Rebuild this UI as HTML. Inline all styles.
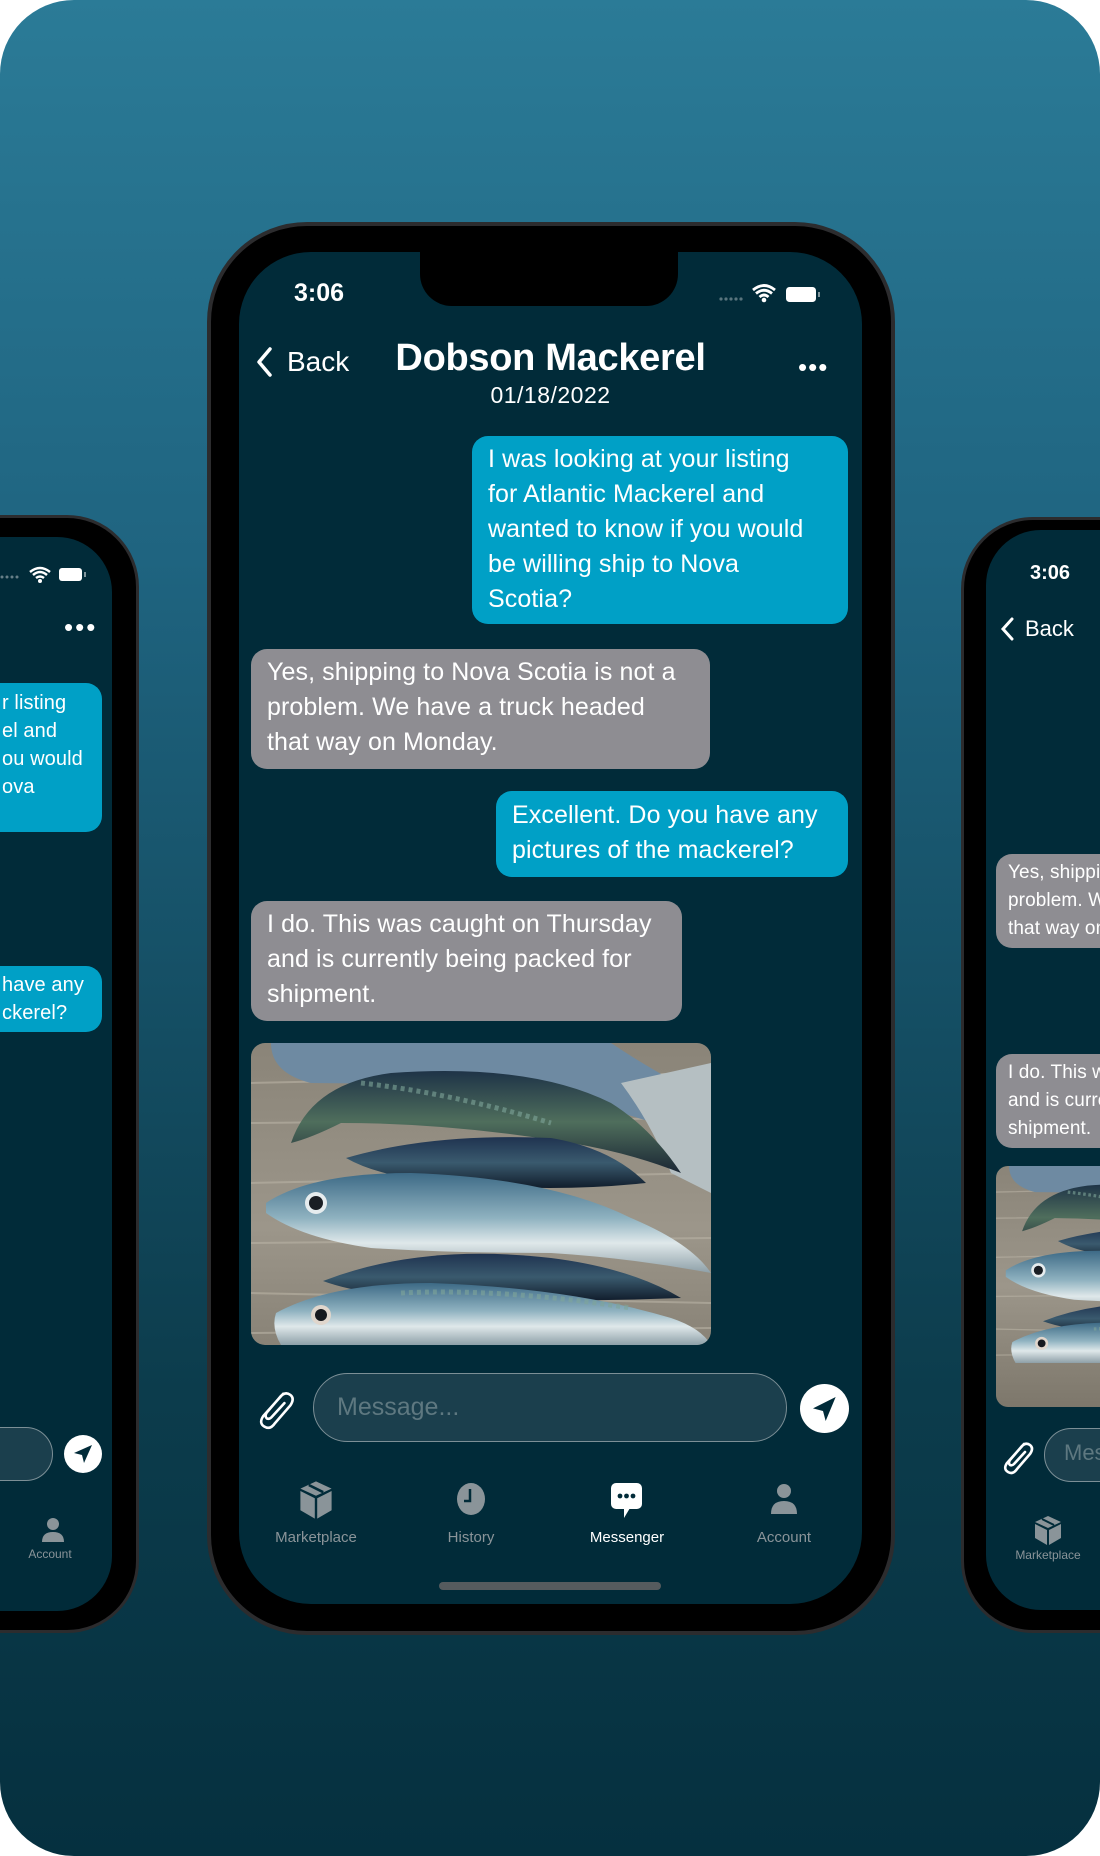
<!DOCTYPE html>
<html><head><meta charset="utf-8"><style>
*{margin:0;padding:0;box-sizing:border-box}
html,body{width:1100px;height:1856px;background:#fff;overflow:hidden}
body{font-family:"Liberation Sans",sans-serif;color:#fff;position:relative}
.bg{position:absolute;left:0;top:0;width:1100px;height:1856px;border-radius:74px;background:linear-gradient(#2b7b97 0%,#1f6480 30%,#0c3c4c 75%,#05303f 100%);overflow:hidden}
.frame{position:absolute;background:#000;border:3px solid #2c2c2e}
.scr{position:absolute;background:#012b39;overflow:hidden}
.a{position:absolute}
.b{position:absolute;border-radius:16px;font-size:25px;line-height:35px;padding:6px 16px;color:#fff;letter-spacing:.1px}
.blue{background:#00a0c6}.grey{background:#8e8d92}
.tab{position:absolute;width:130px;text-align:center;font-size:15px;color:#8a9499}
</style></head><body>
<div class="bg">

<!-- LEFT PHONE -->
<div class="frame" style="left:-200px;top:515px;width:339px;height:1118px;border-radius:72px"></div>
<div class="scr" style="left:-180px;top:537px;width:292px;height:1074px;border-radius:55px">
  <svg class="a" style="left:180px;top:28px" width="120" height="20"><g fill="#fff"><circle cx="2" cy="12" r="1.5" opacity=".4"/><circle cx="7" cy="12" r="1.5" opacity=".4"/><circle cx="12" cy="12" r="1.5" opacity=".4"/><circle cx="17" cy="12" r="1.5" opacity=".4"/></g>
  <path d="M30 7 Q40 -1 50 7 M33 10 Q40 4 47 10 M36 13 Q40 10 44 13" stroke="#fff" stroke-width="2.5" fill="none"/><circle cx="40" cy="16" r="2" fill="#fff"/>
  <rect x="59" y="3" width="23" height="13" rx="3" fill="#fff"/><rect x="84" y="7" width="2" height="5" fill="#fff" opacity=".5"/></svg>
  <div class="a" style="left:244px;top:80px;font-size:26px;letter-spacing:2px;line-height:20px">•••</div>
  <div class="b blue" style="left:-100px;top:146px;width:382px;height:149px;font-size:20px;line-height:28px;padding:6px 14px 6px 14px;white-space:nowrap;text-align:left"><div style="position:absolute;left:282px;top:6px">r listing<br>el and<br>ou would<br>ova</div></div>
  <div class="b blue" style="left:-100px;top:429px;width:382px;height:66px;font-size:20px;line-height:28px;padding:5px 14px;white-space:nowrap"><div style="position:absolute;left:282px;top:5px">have any<br>ckerel?</div></div>
  <div class="a" style="left:0;top:890px;width:233px;height:54px;border-radius:27px;background:#1b3f4d;border:1px solid #7c8f96"></div>
  <div class="a" style="left:244px;top:898px;width:38px;height:38px;border-radius:50%;background:#fff"></div>
  <svg class="a" style="left:251px;top:905px" width="24" height="24" viewBox="0 0 24 24"><path d="M21 3 L3 11 L11 13 L13 21 Z" fill="#012b39"/></svg>
  <svg class="a" style="left:218px;top:978px" width="30" height="30" viewBox="0 0 30 30"><circle cx="15" cy="9" r="6" fill="#8a9499"/><path d="M4 27 Q4 17 15 17 Q26 17 26 27 Z" fill="#8a9499"/></svg>
  <div class="tab" style="left:165px;top:1010px;font-size:12px">Account</div>
</div>

<!-- RIGHT PHONE -->
<div class="frame" style="left:961px;top:517px;width:339px;height:1116px;border-radius:72px"></div>
<div class="scr" style="left:986px;top:530px;width:300px;height:1080px;border-radius:55px">
  <div class="a" style="left:44px;top:32px;font-size:20px;font-weight:bold">3:06</div>
  <svg class="a" style="left:12px;top:86px" width="20" height="26"><path d="M14 3 L5 13 L14 23" stroke="#fff" stroke-width="3" fill="none" stroke-linecap="round"/></svg>
  <div class="a" style="left:39px;top:86px;font-size:22px">Back</div>
  <div class="b grey" style="left:10px;top:324px;width:200px;height:94px;font-size:19px;line-height:28px;padding:5px 12px;white-space:nowrap">Yes, shipping<br>problem. We<br>that way on</div>
  <div class="b grey" style="left:10px;top:524px;width:200px;height:94px;font-size:19px;line-height:28px;padding:5px 12px;white-space:nowrap">I do. This was<br>and is currently<br>shipment.</div>
  <svg class="a" style="left:10px;top:636px;border-radius:12px" width="300" height="241" viewBox="0 0 460 370" preserveAspectRatio="xMinYMin slice"><use href="#fish"/></svg>
  <svg class="a" style="left:14px;top:908px" width="34" height="38" viewBox="0 0 34 38"><path d="M24 6 L7 25 Q3 31 8 34 Q13 37 17 31 L30 16 Q34 10 30 7 Q26 4 22 8 L10 22 Q8 25 10 27 Q12 28 14 26 L25 14" stroke="#fff" stroke-width="2.6" fill="none" stroke-linecap="round"/></svg>
  <div class="a" style="left:58px;top:898px;width:300px;height:54px;border-radius:27px;background:#1b3f4d;border:1px solid #7c8f96"></div>
  <div class="a" style="left:78px;top:910px;font-size:22px;color:#5e7880">Message...</div>
  <svg class="a" style="left:47px;top:984px" width="30" height="32" viewBox="0 0 30 32"><path d="M15 2 L28 8 L15 14 L2 8 Z" fill="#8a9499"/><path d="M2 10 L14 16 L14 31 L2 24 Z M16 16 L28 10 L28 24 L16 31 Z" fill="#8a9499"/><path d="M9 5 L21 11" stroke="#012b39" stroke-width="2"/></svg>
  <div class="tab" style="left:-3px;top:1018px;font-size:12px">Marketplace</div>
</div>

<!-- CENTER PHONE -->
<div class="frame" style="left:207px;top:222px;width:688px;height:1413px;border-radius:100px;border-width:4px"></div>
<div class="scr" style="left:239px;top:252px;width:623px;height:1352px;border-radius:72px">
  <div class="a" style="left:181px;top:0;width:258px;height:54px;background:#000;border-radius:0 0 32px 32px"></div>
  <div class="a" style="left:55px;top:27px;font-size:25px;font-weight:bold">3:06</div>
  <svg class="a" style="left:480px;top:30px" width="120" height="24"><g fill="#fff" opacity=".35"><circle cx="2" cy="17" r="1.6"/><circle cx="7" cy="17" r="1.6"/><circle cx="12" cy="17" r="1.6"/><circle cx="17" cy="17" r="1.6"/><circle cx="22" cy="17" r="1.6"/></g>
  <path d="M34 8 Q45 -1 56 8 M37 11.5 Q45 5 53 11.5 M40.5 15 Q45 11 49.5 15" stroke="#fff" stroke-width="2.8" fill="none"/><circle cx="45" cy="18" r="2.3" fill="#fff"/>
  <rect x="67" y="5" width="30" height="15" rx="3.5" fill="#fff"/><rect x="99" y="10" width="2" height="5" fill="#fff" opacity=".5"/></svg>
  <svg class="a" style="left:14px;top:94px" width="24" height="32"><path d="M17 3 L6 16 L17 29" stroke="#fff" stroke-width="3.5" fill="none" stroke-linecap="round" stroke-linejoin="round"/></svg>
  <div class="a" style="left:48px;top:94px;font-size:28px">Back</div>
  <div class="a" style="left:0;top:85px;width:623px;text-align:center;font-size:38px;font-weight:bold;letter-spacing:-.3px">Dobson Mackerel</div>
  <div class="a" style="left:0;top:130px;width:623px;text-align:center;font-size:23px;letter-spacing:.5px">01/18/2022</div>
  <div class="a" style="left:559px;top:103px;font-size:26px;letter-spacing:1px;line-height:24px">•••</div>
  <div class="b blue" style="left:233px;top:184px;width:376px;height:188px">I was looking at your listing<br>for Atlantic Mackerel and<br>wanted to know if you would<br>be willing ship to Nova<br>Scotia?</div>
  <div class="b grey" style="left:12px;top:397px;width:459px;height:120px">Yes, shipping to Nova Scotia is not a<br>problem. We have a truck headed<br>that way on Monday.</div>
  <div class="b blue" style="left:257px;top:539px;width:352px;height:86px;padding-top:7px">Excellent. Do you have any<br>pictures of the mackerel?</div>
  <div class="b grey" style="left:12px;top:649px;width:431px;height:120px">I do. This was caught on Thursday<br>and is currently being packed for<br>shipment.</div>
  <svg class="a" style="left:12px;top:791px;border-radius:14px" width="460" height="302" viewBox="0 0 460 302">
   <defs>
    <linearGradient id="wood" x1="0" y1="0" x2="0" y2="1"><stop offset="0" stop-color="#8a8478"/><stop offset=".5" stop-color="#9c968a"/><stop offset="1" stop-color="#7d776b"/></linearGradient>
    <linearGradient id="dk" x1="0" y1="0" x2="0" y2="1"><stop offset="0" stop-color="#1f3350"/><stop offset=".5" stop-color="#3a5a6e"/><stop offset="1" stop-color="#111d2c"/></linearGradient>
    <linearGradient id="sv" x1="0" y1="0" x2="0" y2="1"><stop offset="0" stop-color="#3d6a86"/><stop offset=".45" stop-color="#8fb2c0"/><stop offset=".7" stop-color="#dfe8ea"/><stop offset="1" stop-color="#8ea0a8"/></linearGradient>
    <linearGradient id="gr" x1="0" y1="0" x2="0" y2="1"><stop offset="0" stop-color="#1e3347"/><stop offset=".5" stop-color="#4f6e5c"/><stop offset="1" stop-color="#1a2634"/></linearGradient>
    <g id="fish">
     <rect width="460" height="370" fill="url(#wood)"/>
     <g stroke="#b9b3a5" stroke-width="2" opacity=".6"><path d="M0 40 L460 30 M0 80 L460 75 M0 140 L460 130 M0 200 L460 195 M0 250 L460 260 M0 290 L460 285"/></g>
     <path d="M20 0 L360 0 Q420 40 470 60 L470 110 Q420 80 330 60 Q200 40 60 40 Q20 30 20 0Z" fill="#6e8aa2"/>
     <path d="M370 40 L460 20 L460 150 L420 130 Q400 80 370 40Z" fill="#b5bfc2"/>
     <path d="M40 100 Q60 40 140 30 Q280 20 360 60 Q400 85 430 130 Q380 110 320 100 Q200 80 90 80 Q60 95 40 100Z" fill="url(#gr)"/>
     <path d="M95 115 Q180 90 300 95 Q360 105 395 140 Q300 150 200 140 Q130 135 95 115Z" fill="url(#dk)"/>
     <path d="M15 160 Q60 130 160 130 Q300 135 380 175 Q440 200 460 230 Q380 215 300 210 Q200 210 120 205 Q50 195 15 170Z" fill="url(#sv)"/>
     <circle cx="65" cy="160" r="11" fill="#e6ecee"/><circle cx="65" cy="160" r="7" fill="#1a1e24"/>
     <path d="M72 238 Q170 200 300 215 Q380 225 430 255 Q300 260 180 255 Q110 252 72 238Z" fill="url(#dk)"/>
     <path d="M25 270 Q80 240 180 240 Q320 245 420 275 Q450 285 460 302 L30 302 Q20 285 25 270Z" fill="url(#sv)"/>
     <circle cx="70" cy="272" r="10" fill="#e0d6cc"/><circle cx="70" cy="272" r="6" fill="#16191e"/>
     <path d="M110 40 Q200 50 300 80 M150 250 Q250 245 380 265" stroke="#7fa59a" stroke-width="5" stroke-dasharray="4 4" fill="none" opacity=".6"/>
    </g>
   </defs>
   <use href="#fish"/>
  </svg>
  <svg class="a" style="left:16px;top:1134px" width="40" height="46" viewBox="0 0 34 38"><path d="M24 6 L7 25 Q3 31 8 34 Q13 37 17 31 L30 16 Q34 10 30 7 Q26 4 22 8 L10 22 Q8 25 10 27 Q12 28 14 26 L25 14" stroke="#fff" stroke-width="2.2" fill="none" stroke-linecap="round"/></svg>
  <div class="a" style="left:74px;top:1121px;width:474px;height:69px;border-radius:35px;background:#1b3f4d;border:1.5px solid #7c8f96"></div>
  <div class="a" style="left:98px;top:1141px;font-size:25px;color:#5e7880">Message...</div>
  <div class="a" style="left:561px;top:1132px;width:49px;height:49px;border-radius:50%;background:#fff"></div>
  <svg class="a" style="left:570px;top:1141px" width="32" height="32" viewBox="0 0 24 24"><path d="M20 3 L3 11.5 L10.5 13.5 L12.5 21 Z" fill="#012b39"/></svg>
  <svg class="a" style="left:59px;top:1227px" width="36" height="42" viewBox="0 0 30 35"><path d="M15 2 L28 8 L15 14 L2 8 Z" fill="#8a9499"/><path d="M2 10 L14 16 L14 33 L2 26 Z M16 16 L28 10 L28 26 L16 33 Z" fill="#8a9499"/><path d="M9 5 L21 11" stroke="#012b39" stroke-width="2.2"/></svg>
  <svg class="a" style="left:217px;top:1229px" width="30" height="36"><ellipse cx="15" cy="18" rx="14" ry="16" fill="#8a9499"/><path d="M14 8 L14 20 L8 20" stroke="#012b39" stroke-width="2.5" fill="none"/></svg>
  <svg class="a" style="left:371px;top:1229px" width="34" height="40"><rect x="1" y="2" width="31" height="26" rx="5" fill="#fff"/><path d="M14 27 L14 37 L20 27 Z" fill="#fff"/><circle cx="10" cy="15" r="2.4" fill="#012b39"/><circle cx="16.5" cy="15" r="2.4" fill="#012b39"/><circle cx="23" cy="15" r="2.4" fill="#012b39"/></svg>
  <svg class="a" style="left:530px;top:1230px" width="30" height="34"><circle cx="15" cy="9" r="7" fill="#8a9499"/><path d="M2 32 Q2 19 15 19 Q28 19 28 32 Z" fill="#8a9499"/></svg>
  <div class="tab" style="left:12px;top:1277px">Marketplace</div>
  <div class="tab" style="left:167px;top:1277px">History</div>
  <div class="tab" style="left:323px;top:1277px;color:#fff">Messenger</div>
  <div class="tab" style="left:480px;top:1277px">Account</div>
  <div class="a" style="left:200px;top:1330px;width:222px;height:8px;border-radius:4px;background:#555b5e"></div>
</div>
</div>
</body></html>
